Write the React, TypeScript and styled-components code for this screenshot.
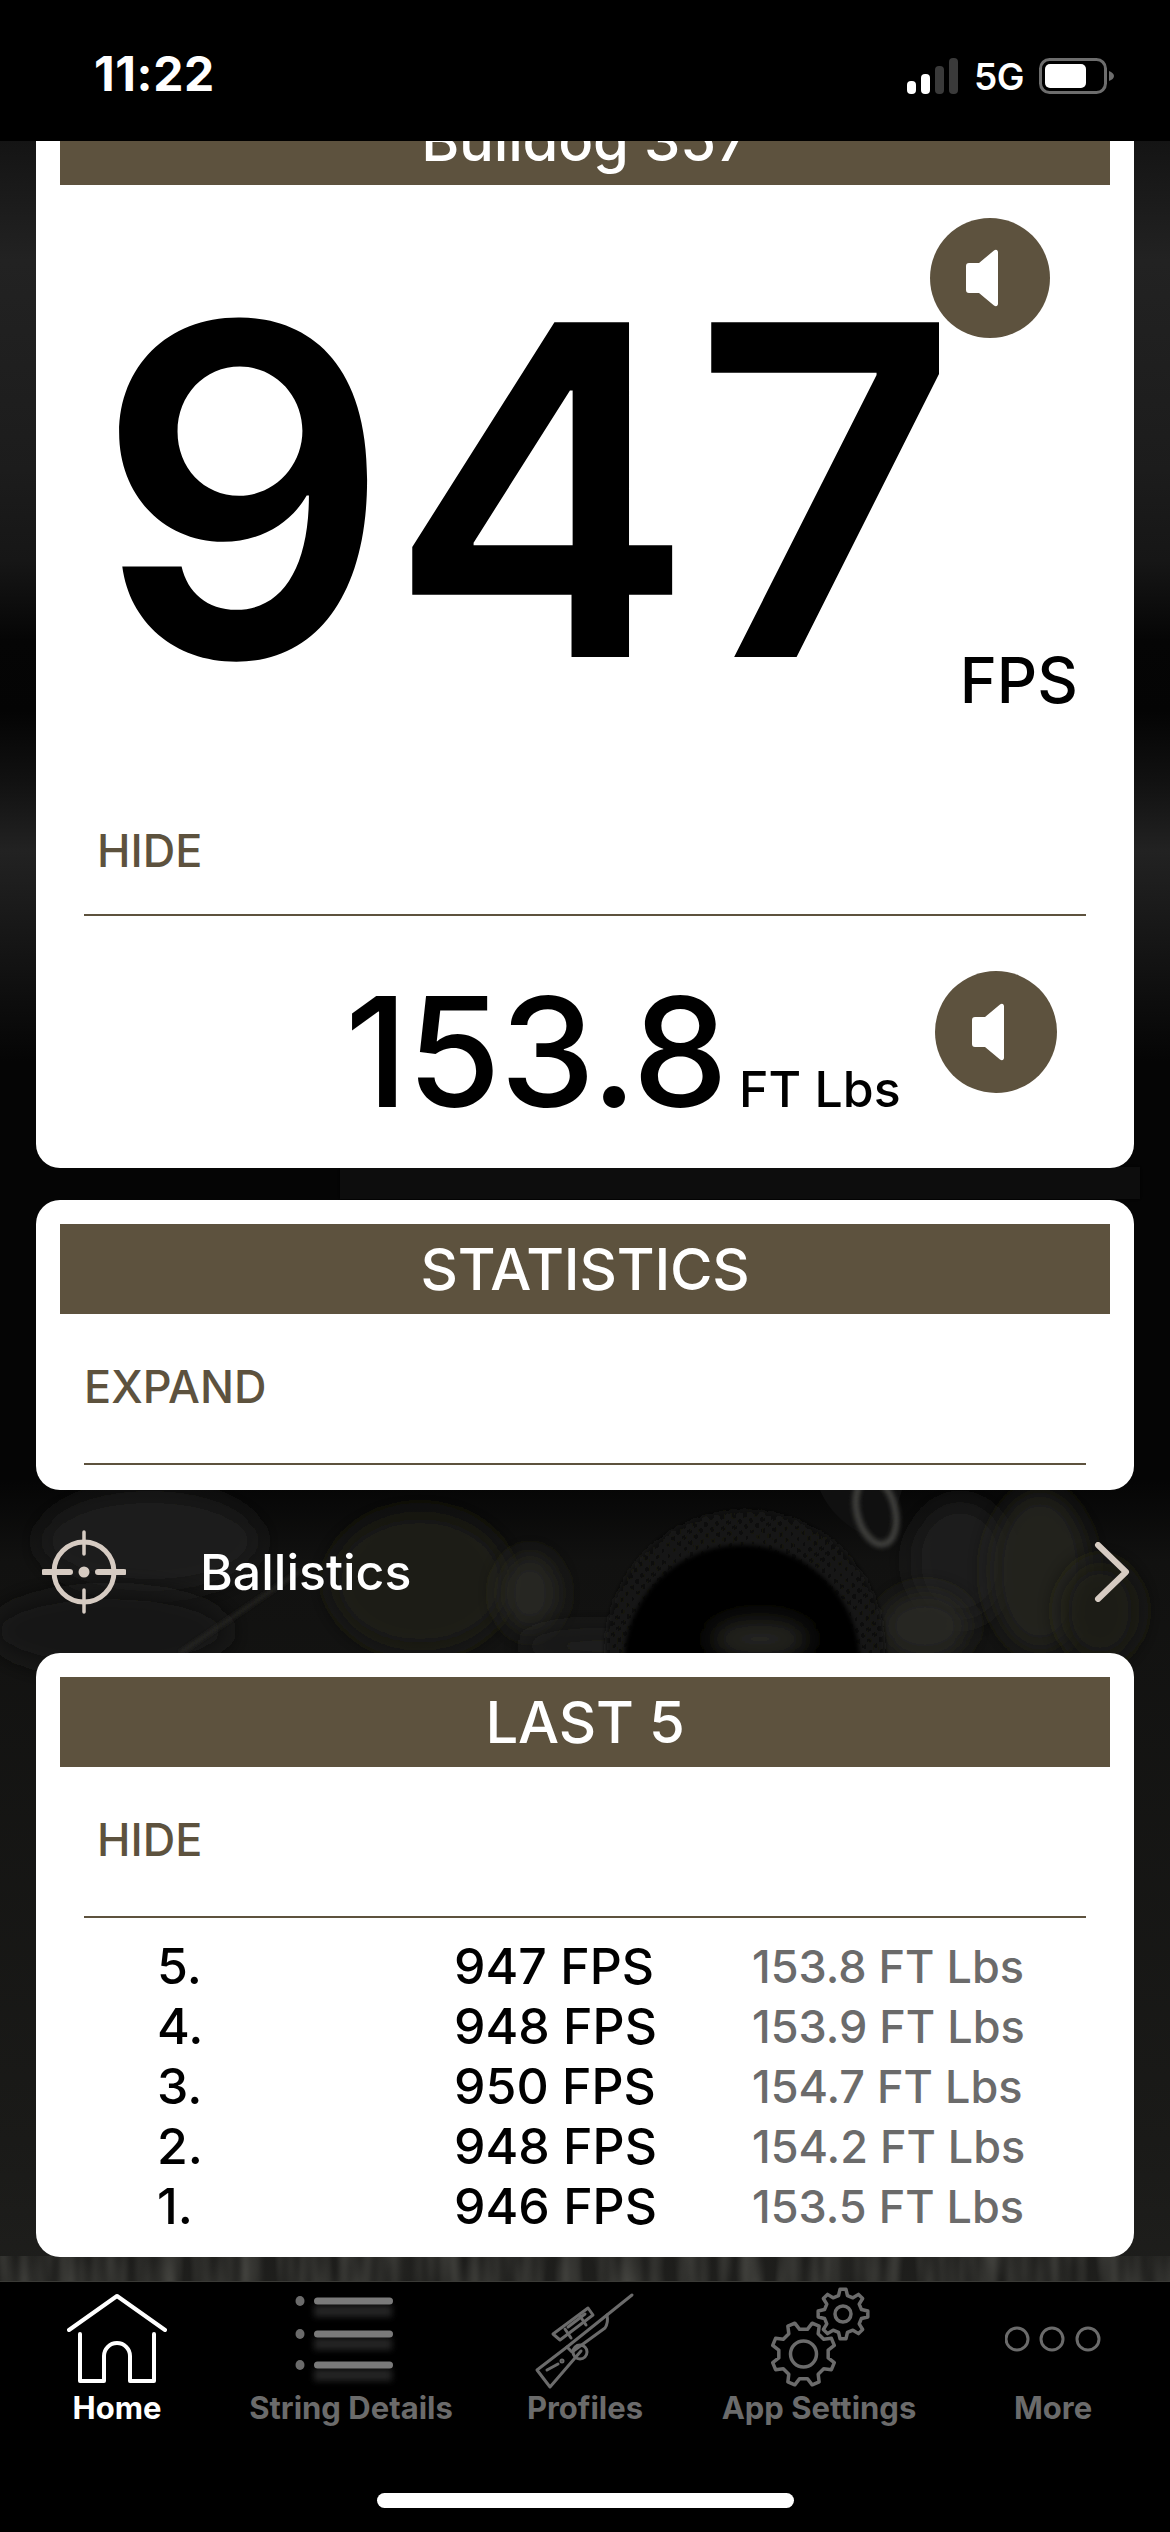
import React from "react";
import styled, { createGlobalStyle } from "styled-components";

const BROWN = "#5d523e";
const MUTED = "#6b6b6b";
const BONE = "#d6cbc2";

const GlobalStyle = createGlobalStyle`
  html, body { margin: 0; padding: 0; background: #000; }
  body { font-family: Inter, "Liberation Sans", sans-serif; }
  * { box-sizing: border-box; }
`;

const Phone = styled.div`
  width: 1170px;
  height: 2532px;
  display: flex;
  flex-direction: column;
  overflow: hidden;
  background: #000;
`;

const StatusBar = styled.div`
  height: 141px;
  flex: none;
  display: flex;
  align-items: flex-start;
  justify-content: space-between;
  padding: 48px 55px 0 94px;
  background: #000;
  color: #fff;
`;

const Clock = styled.span`
  font-size: 48px;
  line-height: 52px;
  font-weight: 700;
  letter-spacing: 0.6px;
`;

const StatusIcons = styled.div`
  display: flex;
  align-items: center;
  gap: 15px;
  height: 44px;
  margin-top: 6px;
`;

const Network = styled.span`
  font-size: 37px;
  font-weight: 600;
  letter-spacing: -0.5px;
`;

const Main = styled.main`
  position: relative;
  flex: 1;
  overflow: hidden;
  background: linear-gradient(
    180deg,
    #141414 0,
    #222222 120px,
    #1c1c1c 330px,
    #161616 420px,
    #050505 500px,
    #040404 570px,
    #111111 640px,
    #222222 710px,
    #131313 820px,
    #050505 920px,
    #050505 1340px,
    #111110 1420px,
    #1a1a18 2000px,
    #1e1e1c 2140px
  );
`;

const Backdrop = styled.svg`
  position: absolute;
  inset: 0;
  width: 100%;
  height: 100%;
`;

const Scroller = styled.div`
  position: relative;
  display: flex;
  flex-direction: column;
  margin-top: -70px;
  padding: 0 36px;
`;

const Card = styled.section<{ $gap?: number }>`
  background: #fff;
  border-radius: 24px;
  padding: 24px 24px 0;
  margin-top: ${(p) => p.$gap ?? 0}px;
  position: relative;
`;

const Header = styled.h2`
  margin: 0;
  height: 90px;
  background: ${BROWN};
  color: #fff;
  font-size: 58px;
  font-weight: 500;
  line-height: 90px;
  text-align: center;
  letter-spacing: -0.2px;
`;

const Toggle = styled.div<{ $inset: number; $height: number; $below: number }>`
  height: ${(p) => p.$height}px;
  margin: 0 24px;
  padding: 0 0 ${(p) => p.$below}px ${(p) => p.$inset}px;
  display: flex;
  align-items: flex-end;
  border-bottom: 2px solid ${BROWN};
  color: ${BROWN};
  font-size: 45px;
  font-weight: 500;
  line-height: 52px;
`;

const CardFoot = styled.div`
  height: 25px;
`;

const Reading = styled.div`
  height: 625px;
  display: flex;
  align-items: flex-start;
  padding-left: 36px;
  color: #000;
`;

const Velocity = styled.span`
  font-size: 460px;
  font-weight: 600;
  line-height: 610px;
  letter-spacing: -2px;
`;

const ReadingUnit = styled.span`
  font-size: 63px;
  font-weight: 500;
  line-height: 70px;
  margin: 460px 0 0 4px;
`;

const SoundButton = styled.div<{ $top: number; $right: number; $size: number }>`
  position: absolute;
  top: ${(p) => p.$top}px;
  right: ${(p) => p.$right}px;
  width: ${(p) => p.$size}px;
  height: ${(p) => p.$size}px;
  border-radius: 50%;
  background: ${BROWN};
  display: flex;
  align-items: center;
  justify-content: center;
`;

const EnergyRow = styled.div`
  height: 252px;
  display: flex;
  align-items: baseline;
  padding: 46px 0 0 285px;
  color: #000;
`;

const Energy = styled.span`
  font-size: 152px;
  font-weight: 500;
  line-height: 180px;
  letter-spacing: -1px;
`;

const EnergyUnit = styled.span`
  font-size: 50px;
  font-weight: 500;
  margin-left: 12px;
`;

const LinkRow = styled.div`
  height: 163px;
  display: flex;
  align-items: center;
  margin: 0 -36px;
  padding: 0 40px 0 42px;
  color: #fff;
`;

const LinkLabel = styled.span`
  font-size: 50px;
  font-weight: 500;
  margin-left: 74px;
`;

const Chevron = styled.svg`
  margin-left: auto;
`;

const ShotList = styled.div`
  padding: 18px 24px 21px 0;
`;

const ShotRow = styled.div`
  display: grid;
  grid-template-columns: 297px 298px 1fr;
  height: 60px;
  align-items: center;
  padding-left: 97px;
  font-size: 50px;
  font-weight: 500;
  color: #000;
`;

const ShotEnergy = styled.span`
  color: ${MUTED};
  font-size: 45px;
`;

const TabBar = styled.nav`
  flex: none;
  height: 251px;
  display: grid;
  grid-template-columns: repeat(5, 234px);
  align-items: start;
  position: relative;
  background: #000;
  border-top: 1px solid #3a3a36;
`;

const Tab = styled.div<{ $active?: boolean }>`
  display: flex;
  flex-direction: column;
  align-items: center;
  padding-top: 6px;
  color: ${(p) => (p.$active ? "#fff" : MUTED)};
`;

const TabIcon = styled.div`
  height: 102px;
  display: flex;
  align-items: center;
  justify-content: center;
`;

const TabLabel = styled.span`
  font-size: 31px;
  font-weight: 700;
  line-height: 36px;
  white-space: nowrap;
`;

const HomeIndicator = styled.div`
  position: absolute;
  left: 377px;
  bottom: 24px;
  width: 417px;
  height: 15px;
  border-radius: 8px;
  background: #fff;
`;

const Speaker = ({ size }: { size: number }) => (
  <svg width={size} height={size} viewBox="0 0 60 60">
    <path
      d="M13 15h10L38 2.5c2-1.6 4-.6 4 2v51c0 2.6-2 3.6-4 2L23 45H13c-2 0-3-1-3-3V18c0-2 1-3 3-3z"
      fill="#fff"
      transform="translate(-4 0)"
    />
  </svg>
);

const SignalIcon = () => (
  <svg width="52" height="36" viewBox="0 0 52 36">
    <rect x="0" y="23" width="9" height="13" rx="4" fill="#fff" />
    <rect x="14" y="16" width="9" height="20" rx="4" fill="#fff" />
    <rect x="28" y="8" width="9" height="28" rx="4" fill="#3a3a3a" />
    <rect x="42" y="0" width="9" height="36" rx="4" fill="#3a3a3a" />
  </svg>
);

const BatteryIcon = () => (
  <svg width="76" height="36" viewBox="0 0 76 36">
    <rect x="1.5" y="1.5" width="65" height="33" rx="9" fill="none" stroke="#6d6d6d" strokeWidth="3" />
    <rect x="6" y="6" width="41" height="24" rx="5" fill="#fff" />
    <path d="M70 13c3 1 5 3 5 5s-2 4-5 5z" fill="#6d6d6d" />
  </svg>
);

const Reticle = () => (
  <svg width="84" height="84" viewBox="0 0 84 84" fill="none" stroke={BONE} strokeLinecap="round">
    <circle cx="42" cy="42" r="30" strokeWidth="5" />
    <path d="M42 2v22M42 60v22" strokeWidth="3.5" />
    <path d="M2 42h26M56 42h26" strokeWidth="6" />
    <circle cx="42" cy="42" r="5.5" fill={BONE} stroke="none" />
  </svg>
);

const HomeIcon = () => (
  <svg width="100" height="90" viewBox="0 0 100 90" fill="none" stroke="#fff" strokeWidth="4" strokeLinecap="round" strokeLinejoin="round">
    <path d="M2 36 50 2l48 34" />
    <path d="M13 40v47h24V62a13 13 0 0 1 26 0v25h24V40" />
  </svg>
);

const ListIcon = () => (
  <svg width="112" height="100" viewBox="0 0 112 100">
    <defs>
      <filter id="line-glow" x="-10%" y="-100%" width="120%" height="400%">
        <feGaussianBlur stdDeviation="3" />
      </filter>
    </defs>
    {[12, 45, 76].map((y) => (
      <g key={y}>
        <rect x="19" y={y + 4} width="78" height="12" fill="#4a4a4a" opacity="0.5" filter="url(#line-glow)" />
        <ellipse cx="5" cy={y} rx="4.5" ry="5" fill={MUTED} />
        <rect x="19" y={y - 3.5} width="79" height="7" rx="3.5" fill="#7a7a7a" />
      </g>
    ))}
  </svg>
);

const RifleIcon = () => (
  <svg width="110" height="105" viewBox="0 0 110 105" fill="none" stroke={MUTED} strokeWidth="3" strokeLinejoin="round" strokeLinecap="round">
    <path d="M102 8 77 28" />
    <path d="M77 28 37 60l5 5 33-24c2-3 3-8 2-13z" />
    <path d="M23 47 58 21l5 7-33 25z" />
    <path d="M35 42l6 9M50 29l6 9M38 40l17-13" />
    <path d="M37 60 7 83l13 17 31-36" />
    <circle cx="50" cy="65" r="7" />
    <path d="M17 83l11-6" />
    <circle cx="32" cy="74" r="1" />
  </svg>
);

// teeth are computed so both gears share one outline
const gearPath = (cx: number, cy: number, outer: number, inner: number, teeth: number, turn: number) => {
  const pts: string[] = [];
  const step = (Math.PI * 2) / teeth;
  for (let i = 0; i < teeth; i++) {
    const a = (i + turn) * step - Math.PI / 2;
    const at = (r: number, t: number) =>
      `${(cx + r * Math.cos(a + t * step)).toFixed(2)} ${(cy + r * Math.sin(a + t * step)).toFixed(2)}`;
    pts.push(at(inner, -0.3), at(outer, -0.15), at(outer, 0.15), at(inner, 0.3));
  }
  return `M${pts.join("L")}Z`;
};

const GearsIcon = () => (
  <svg width="115" height="110" viewBox="0 0 115 110" fill="none" stroke={MUTED} strokeWidth="3.5" strokeLinejoin="round">
    <path d={gearPath(41.5, 70, 32, 25, 8, 0.5)} />
    <circle cx="41.5" cy="70" r="13" />
    <path d={gearPath(81, 30, 25, 19, 8, 0)} />
    <circle cx="81" cy="30" r="8" />
  </svg>
);

const MoreIcon = () => (
  <svg width="96" height="26" viewBox="0 0 96 26" fill="none" stroke={MUTED} strokeWidth="3">
    <circle cx="12" cy="13" r="11" />
    <circle cx="47" cy="13" r="11" />
    <circle cx="83" cy="13" r="11" />
  </svg>
);

const shots = [
  { n: "5.", fps: "947 FPS", energy: "153.8 FT Lbs" },
  { n: "4.", fps: "948 FPS", energy: "153.9 FT Lbs" },
  { n: "3.", fps: "950 FPS", energy: "154.7 FT Lbs" },
  { n: "2.", fps: "948 FPS", energy: "154.2 FT Lbs" },
  { n: "1.", fps: "946 FPS", energy: "153.5 FT Lbs" },
];

const tabs = [
  { label: "Home", icon: <HomeIcon />, active: true },
  { label: "String Details", icon: <ListIcon /> },
  { label: "Profiles", icon: <RifleIcon /> },
  { label: "App Settings", icon: <GearsIcon /> },
  { label: "More", icon: <MoreIcon /> },
];

// blurred patches of the photo, in Main's coordinates
const blobs = [
  { cx: 150, cy: 1400, rx: 110, ry: 50, fill: "#1e1e1c" },
  { cx: 420, cy: 1440, rx: 90, ry: 70, fill: "#1a1a18" },
  { cx: 110, cy: 1490, rx: 120, ry: 40, fill: "#191917" },
  { cx: 530, cy: 1452, rx: 30, ry: 40, fill: "#252521" },
  { cx: 600, cy: 1505, rx: 80, ry: 18, fill: "#1f1f1c" },
  { cx: 960, cy: 1420, rx: 50, ry: 60, fill: "#1f1f1c" },
  { cx: 925, cy: 1485, rx: 45, ry: 35, fill: "#282824" },
  { cx: 1040, cy: 1430, rx: 50, ry: 80, fill: "#21211e" },
  { cx: 1100, cy: 1470, rx: 40, ry: 50, fill: "#1b1b19" },
];

function App() {
  return (
    <Phone>
      <GlobalStyle />
      <StatusBar>
        <Clock>11:22</Clock>
        <StatusIcons>
          <SignalIcon />
          <Network>5G</Network>
          <BatteryIcon />
        </StatusIcons>
      </StatusBar>

      <Main>
        {/* the blurred photo behind the cards */}
        <Backdrop viewBox="0 0 1170 2140" preserveAspectRatio="none">
          <defs>
            <filter id="soft" x="-50%" y="-50%" width="200%" height="200%">
              <feGaussianBlur stdDeviation="12" />
            </filter>
            <filter id="edge" x="-20%" y="-20%" width="140%" height="140%">
              <feGaussianBlur stdDeviation="2" />
            </filter>
            <filter id="grain" colorInterpolationFilters="sRGB">
              <feTurbulence type="fractalNoise" baseFrequency="0.05 0.008" numOctaves="2" seed="7" />
              <feColorMatrix values="0 0 0 0 0.32  0 0 0 0 0.32  0 0 0 0 0.3  1.6 0 0 0 -0.55" />
            </filter>
            <pattern id="knurl" width="8" height="8" patternUnits="userSpaceOnUse" patternTransform="rotate(40)">
              <rect width="8" height="8" fill="#111110" />
              <rect width="4" height="4" fill="#232321" />
            </pattern>
          </defs>
          {blobs.map((b) => (
            <ellipse key={`${b.cx}-${b.cy}`} {...b} filter="url(#soft)" />
          ))}
          <rect x="0" y="2118" width="1170" height="22" filter="url(#grain)" />
          <rect x="340" y="1026" width="800" height="32" fill="#101010" filter="url(#edge)" />
          <circle cx="745" cy="1509" r="140" fill="url(#knurl)" filter="url(#edge)" />
          <circle cx="742" cy="1522" r="118" fill="#050505" filter="url(#edge)" />
          <ellipse cx="760" cy="1498" rx="50" ry="20" fill="#262624" filter="url(#soft)" />
          <path d="M820 1349c10 25 40 50 66 50l16-50z" fill="#101010" />
          <ellipse cx="876" cy="1370" rx="19" ry="34" fill="none" stroke="#3d3d3a" strokeWidth="7" transform="rotate(-14 876 1370)" filter="url(#edge)" />
          <path d="M180 1512 300 1430" stroke="#2c2b28" strokeWidth="3" filter="url(#edge)" />
        </Backdrop>

        <Scroller>
          <Card>
            <Header>Bulldog 357</Header>
            <SoundButton $top={147} $right={84} $size={120}>
              <Speaker size={60} />
            </SoundButton>
            <Reading>
              <Velocity>947</Velocity>
              <ReadingUnit>FPS</ReadingUnit>
            </Reading>
            <Toggle $inset={13} $height={106} $below={37}>HIDE</Toggle>
            <SoundButton $top={900} $right={77} $size={122}>
              <Speaker size={60} />
            </SoundButton>
            <EnergyRow>
              <Energy>153.8</Energy>
              <EnergyUnit>FT Lbs</EnergyUnit>
            </EnergyRow>
          </Card>

          <Card $gap={32}>
            <Header>STATISTICS</Header>
            <Toggle $inset={0} $height={151} $below={50}>EXPAND</Toggle>
            <CardFoot />
          </Card>

          <LinkRow>
            <Reticle />
            <LinkLabel>Ballistics</LinkLabel>
            <Chevron width="36" height="60" viewBox="0 0 36 60" fill="none" stroke={BONE} strokeWidth="6" strokeLinecap="round" strokeLinejoin="round">
              <path d="M4 3 32 30 4 57" />
            </Chevron>
          </LinkRow>

          <Card>
            <Header>LAST 5</Header>
            <Toggle $inset={13} $height={151} $below={50}>HIDE</Toggle>
            <ShotList>
              {shots.map((s) => (
                <ShotRow key={s.n}>
                  <span>{s.n}</span>
                  <span>{s.fps}</span>
                  <ShotEnergy>{s.energy}</ShotEnergy>
                </ShotRow>
              ))}
            </ShotList>
          </Card>
        </Scroller>
      </Main>

      <TabBar>
        {tabs.map((t) => (
          <Tab key={t.label} $active={t.active}>
            <TabIcon>{t.icon}</TabIcon>
            <TabLabel>{t.label}</TabLabel>
          </Tab>
        ))}
        <HomeIndicator />
      </TabBar>
    </Phone>
  );
}

export default App;
